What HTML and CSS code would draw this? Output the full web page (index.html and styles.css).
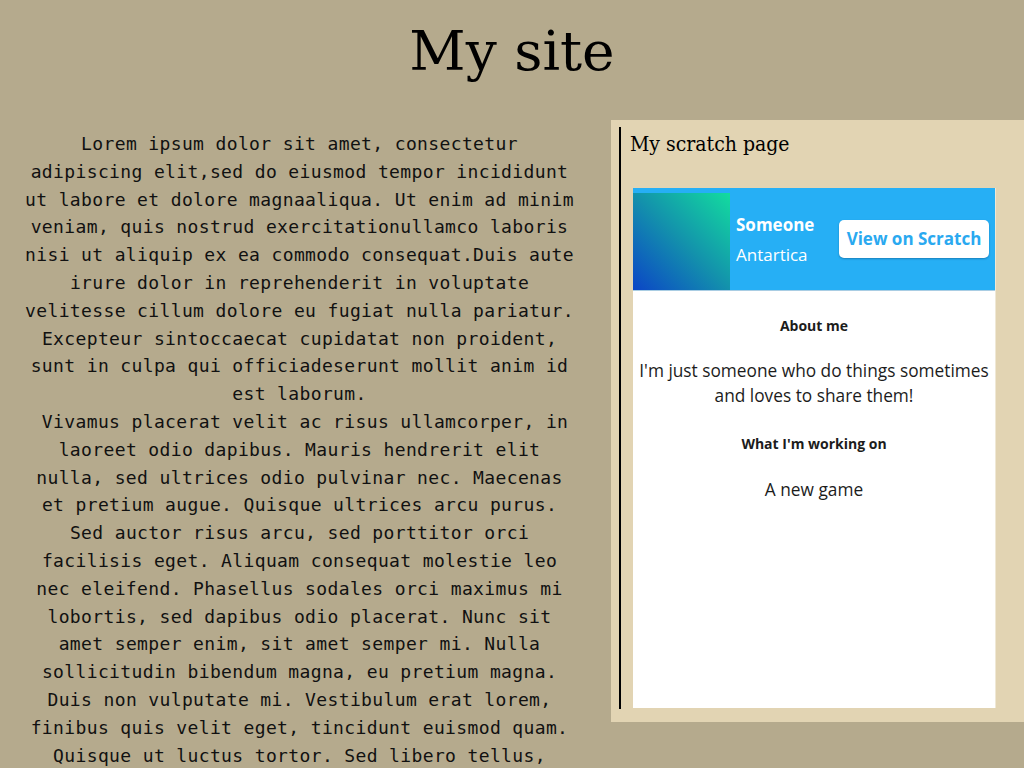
FILE: index.html
```html
<!DOCTYPE html>
<html lang="en">
<head>
<meta charset="utf-8">
<title>My site</title>
<link rel="stylesheet" href="styles.css">
</head>
<body>
<h1 class="site-title">My site</h1>
<div class="main">
  <div class="content">
    <p class="lorem">Lorem ipsum dolor sit amet, consectetur adipiscing elit,sed do eiusmod tempor incididunt ut labore et dolore magnaaliqua. Ut enim ad minim veniam, quis nostrud exercitationullamco laboris nisi ut aliquip ex ea commodo consequat.Duis aute irure dolor in reprehenderit in voluptate velitesse cillum dolore eu fugiat nulla pariatur. Excepteur sintoccaecat cupidatat non proident, sunt in culpa qui officiadeserunt mollit anim id est laborum.<br>&nbsp;Vivamus placerat velit ac risus ullamcorper, in laoreet odio dapibus. Mauris hendrerit elit nulla, sed ultrices odio pulvinar nec. Maecenas et pretium augue. Quisque ultrices arcu purus. Sed auctor risus arcu, sed porttitor orci facilisis eget. Aliquam consequat molestie leo nec eleifend. Phasellus sodales orci maximus mi lobortis, sed dapibus odio placerat. Nunc sit amet semper enim, sit amet semper mi. Nulla sollicitudin bibendum magna, eu pretium magna. Duis non vulputate mi. Vestibulum erat lorem, finibus quis velit eget, tincidunt euismod quam. Quisque ut luctus tortor. Sed libero tellus, efficitur sit amet luctus eu, feugiat non nisi. Donec in lacus ut lorem maximus porta.</p>
  </div>
  <aside class="sidebar">
    <div class="sidebar-inner">
      <h2 class="sidebar-title">My scratch page</h2>
      <div class="scratch-card">
        <div class="card-header">
          <div class="thumb"></div>
          <div class="names">
            <div class="username">Someone</div>
            <div class="location">Antartica</div>
          </div>
          <div class="view-btn">View on Scratch</div>
        </div>
        <div class="card-body">
          <div class="label label-about">About me</div>
          <div class="text text-about">I'm just someone who do things sometimes and loves to share them!</div>
          <div class="label label-work">What I'm working on</div>
          <div class="text text-work">A new game</div>
        </div>
      </div>
    </div>
  </aside>
</div>
</body>
</html>
```

FILE: styles.css
```css
html, body {
  margin: 0;
  padding: 0;
}
body {
  background: #b5aa8d;
  color: #000;
  height: 768px;
  overflow: hidden;
}
.site-title {
  margin: 0;
  padding-top: 19px;
  font-family: "DejaVu Serif", serif;
  font-weight: normal;
  font-size: 55px;
  line-height: 64px;
  text-align: center;
  height: 120px;
  box-sizing: border-box;
}
.main {
  display: flex;
  align-items: flex-start;
}
.content {
  flex: 0 0 611px;
  box-sizing: border-box;
  padding: 10px 35px 0 23px;
}
.lorem {
  margin: 0;
  font-family: "DejaVu Sans Mono", monospace;
  font-size: 18px;
  letter-spacing: 0.364px;
  line-height: 27.8px;
  text-align: center;
  color: #111;
}
.sidebar {
  flex: 1;
  background: #e2d4b3;
  padding: 7px 0 13px 8px;
}
.sidebar-inner {
  border-left: 2px solid #000;
  padding: 4px 0 1px 0;
}
.sidebar-title {
  margin: 0 0 0 9px;
  font-family: "DejaVu Serif Condensed", "DejaVu Serif", serif;
  font-stretch: condensed;
  font-weight: normal;
  font-size: 21px;
  line-height: 27px;
}
.scratch-card {
  margin: 30px 0 0 12px;
  width: 362px;
  height: 520px;
  background: #fff;
  box-shadow: 1px 0 0 #efe8d6;
  font-family: "Open Sans", sans-serif;
  color: #1c1c1c;
}
.card-header {
  display: flex;
  align-items: center;
  height: 102px;
  background: #26aff5;
  border-bottom: 1px solid #a9cde3;
}
.thumb {
  align-self: flex-end;
  width: 97px;
  height: 97px;
  background: linear-gradient(45deg, #0b45c6 0%, #1391ac 50%, #13dc9f 100%);
}
.names {
  flex: 1;
  padding-left: 6px;
  color: #fff;
  font-size: 17px;
  line-height: 30px;
  padding-top: 1px;
}
.username {
  font-weight: bold;
}
.view-btn {
  margin-right: 6px;
  width: 150px;
  height: 38px;
  box-sizing: border-box;
  background: #fff;
  border-radius: 5px;
  box-shadow: 0 1px 2px rgba(0, 40, 80, 0.35);
  color: #2aa9f0;
  font-weight: bold;
  font-size: 17px;
  line-height: 38px;
  text-align: center;
}
.card-body {
  text-align: center;
  padding: 0 4px;
}
.label {
  font-weight: bold;
  font-size: 14px;
  line-height: 20px;
}
.label-about {
  margin-top: 25px;
}
.text {
  font-size: 17.3px;
  line-height: 25px;
}
.text-about {
  margin-top: 22px;
}
.label-work {
  margin-top: 26px;
}
.text-work {
  margin-top: 23px;
}
```
